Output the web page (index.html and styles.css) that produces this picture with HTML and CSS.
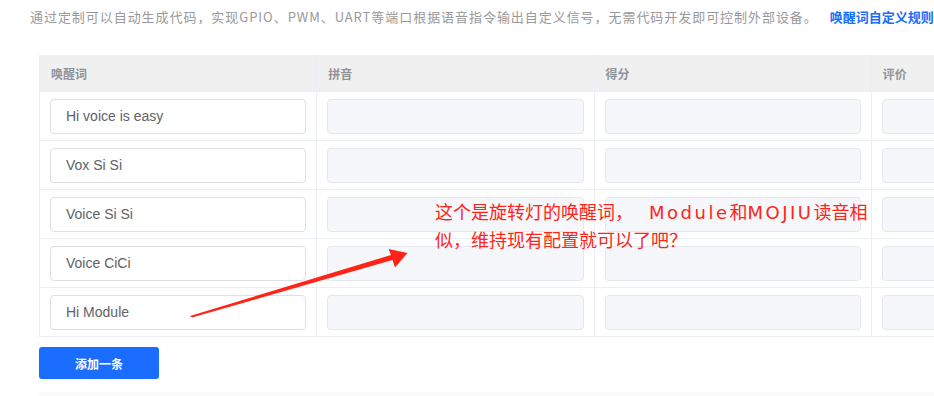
FILE: index.html
```html
<!DOCTYPE html>
<html lang="zh-CN">
<head>
    <meta charset="UTF-8">
    <meta name="viewport" content="width=device-width, initial-scale=1.0">
    <title>唤醒词配置</title>
    <link rel="stylesheet" href="styles.css">
</head>
<body>
    <div class="page">
        <p class="intro">
            <span class="intro-text">通过定制可以自动生成代码，实现GPIO、PWM、UART等端口根据语音指令输出自定义信号，无需代码开发即可控制外部设备。</span><a class="rule-link" href="#">唤醒词自定义规则</a>
        </p>

        <table class="wake-table">
            <thead>
                <tr>
                    <th>唤醒词</th>
                    <th>拼音</th>
                    <th>得分</th>
                    <th>评价</th>
                </tr>
            </thead>
            <tbody>
                <tr>
                    <td><input class="field" type="text" value="Hi voice is easy"></td>
                    <td><input class="field" type="text" disabled></td>
                    <td><input class="field" type="text" disabled></td>
                    <td><input class="field" type="text" disabled></td>
                </tr>
                <tr>
                    <td><input class="field" type="text" value="Vox Si Si"></td>
                    <td><input class="field" type="text" disabled></td>
                    <td><input class="field" type="text" disabled></td>
                    <td><input class="field" type="text" disabled></td>
                </tr>
                <tr>
                    <td><input class="field" type="text" value="Voice Si Si"></td>
                    <td><input class="field" type="text" disabled></td>
                    <td><input class="field" type="text" disabled></td>
                    <td><input class="field" type="text" disabled></td>
                </tr>
                <tr>
                    <td><input class="field" type="text" value="Voice CiCi"></td>
                    <td><input class="field" type="text" disabled></td>
                    <td><input class="field" type="text" disabled></td>
                    <td><input class="field" type="text" disabled></td>
                </tr>
                <tr>
                    <td><input class="field" type="text" value="Hi Module"></td>
                    <td><input class="field" type="text" disabled></td>
                    <td><input class="field" type="text" disabled></td>
                    <td><input class="field" type="text" disabled></td>
                </tr>
            </tbody>
        </table>

        <button class="add-btn" type="button">添加一条</button>

        <div class="next-card"></div>

        <!-- review annotation drawn over the screenshot -->
        <svg class="note-arrow" width="934" height="396" viewBox="0 0 934 396">
            <polygon points="190,316 391,255 388.5,249 407.5,253 395,267.5 392.5,260 192,317.5" fill="#ff2417"/>
        </svg>
        <div class="note">这个是旋转灯的唤醒词，<span class="latin first">Module</span>和<span class="latin">MOJIU</span>读音相<br>似，维持现有配置就可以了吧？</div>
    </div>
</body>
</html>
```

FILE: styles.css
```css
body {
    margin: 0;
    background-color: #fff;
    font-family: "Noto Sans CJK SC", "Liberation Sans", sans-serif;
    overflow: hidden;
}
.page {
    position: relative;
    width: 934px;
    height: 396px;
    overflow: hidden;
    padding-left: 39px;
    box-sizing: border-box;
}
.intro {
    margin: 0 0 0 -9px;
    padding-top: 7px;
    height: 48px;
    font-size: 13px;
    line-height: 20px;
    color: #999;
    white-space: nowrap;
}
.intro-text {
    letter-spacing: 0.95px;
}
.rule-link {
    margin-left: 12px;
    color: #1a6dff;
    font-weight: bold;
    text-decoration: none;
}
.wake-table {
    width: 1110px;
    table-layout: fixed;
    border-collapse: collapse;
}
.wake-table th,
.wake-table td {
    border: 1px solid #ebeef5;
    text-align: left;
}
.wake-table th {
    height: 36px;
    padding: 0 11px;
    background-color: #f0f0f0;
    border-top: none;
    font-size: 12px;
    font-weight: bold;
    color: #909399;
}
.wake-table td {
    height: 49px;
    padding: 6px 10px;
    box-sizing: border-box;
}
.field {
    display: block;
    width: 100%;
    height: 35px;
    box-sizing: border-box;
    padding: 0 15px;
    border: 1px solid #dcdfe6;
    border-radius: 4px;
    background-color: #fff;
    font-family: "Liberation Sans", Arial, sans-serif;
    font-size: 14px;
    color: #606266;
    outline: none;
}
.field:disabled {
    background-color: #f5f7fa;
    border-color: #e4e7ed;
}
.add-btn {
    display: block;
    margin-top: 10px;
    width: 120px;
    height: 32px;
    border: none;
    border-radius: 3px;
    background-color: #1a6dff;
    color: #fff;
    font-family: "Noto Sans CJK SC", sans-serif;
    font-size: 12px;
    font-weight: bold;
}
.next-card {
    margin-top: 13px;
    height: 10px;
    background-color: #fbfbfb;
}
.note-arrow {
    position: absolute;
    left: 0;
    top: 0;
}
.note {
    position: absolute;
    left: 435px;
    top: 198px;
    font-size: 18px;
    line-height: 26px;
    color: #ff2417;
    white-space: nowrap;
}
.note .latin {
    font-family: "DejaVu Sans", sans-serif;
    letter-spacing: 2.5px;
}
.note .first {
    margin-left: 16px;
}
```
